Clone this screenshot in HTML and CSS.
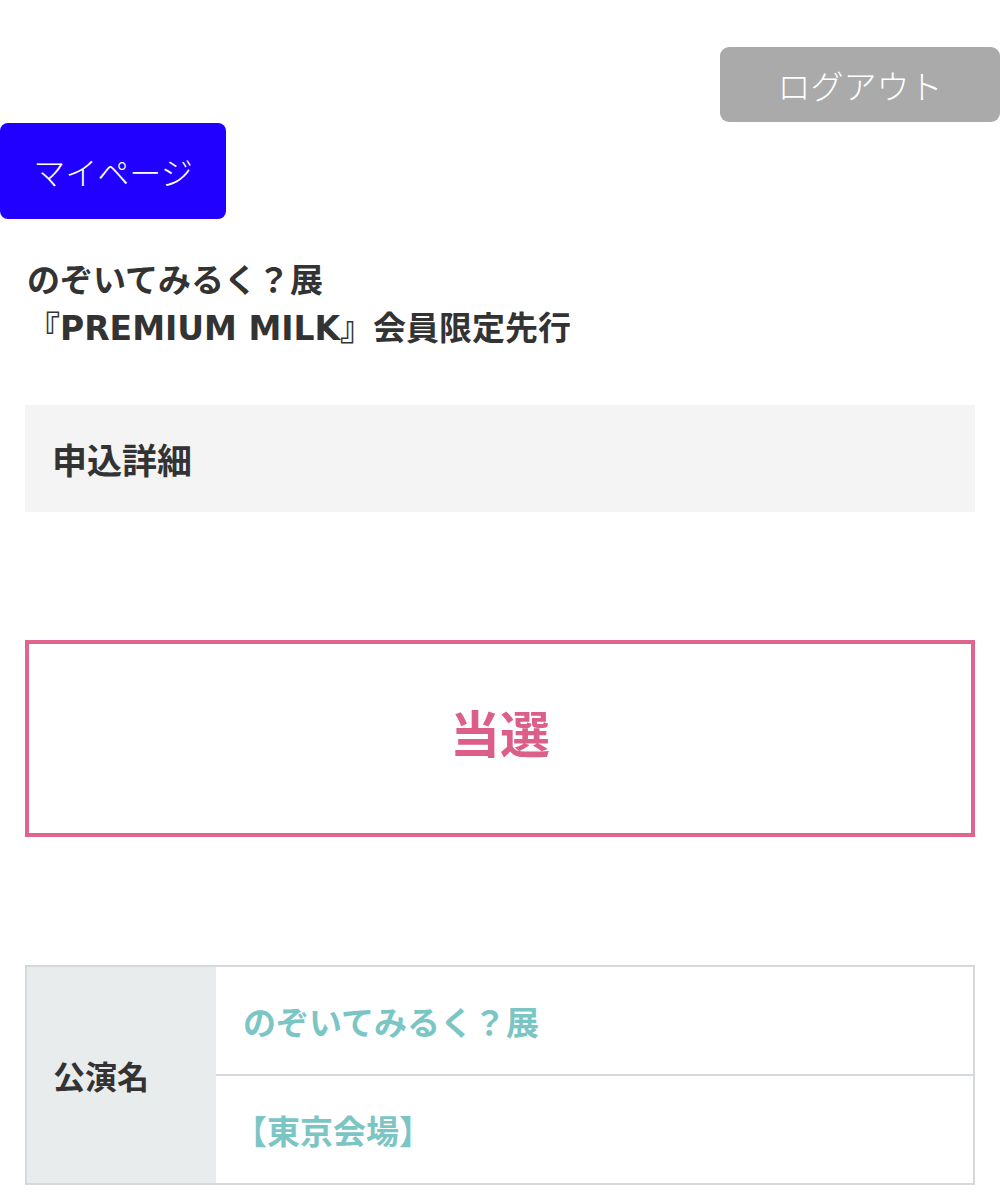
FILE: index.html
```html
<!DOCTYPE html>
<html lang="ja">
<head>
    <meta charset="UTF-8">
    <meta name="viewport" content="width=device-width, initial-scale=1.0">
    <title>申込詳細</title>
    <link rel="stylesheet" href="styles.css">
</head>
<body>
    <div class="header">
        <a class="logout-btn" href="#">ログアウト</a>
    </div>
    <div class="nav">
        <a class="mypage-btn" href="#">マイページ</a>
    </div>

    <!-- Event title -->
    <div class="event-title">
        のぞいてみるく？展<br>
        『PREMIUM MILK』会員限定先行
    </div>

    <div class="section-head">申込詳細</div>

    <!-- Lottery result -->
    <div class="result">当選</div>

    <!-- Detail table -->
    <table class="detail">
        <colgroup>
            <col class="label-col">
            <col>
        </colgroup>
        <tr>
            <th rowspan="2">公演名</th>
            <td>のぞいてみるく？展</td>
        </tr>
        <tr>
            <td class="venue">【東京会場】</td>
        </tr>
    </table>
</body>
</html>
```

FILE: styles.css
```css
/* Base */
body {
    font-family: "Liberation Sans", "Noto Sans CJK JP", sans-serif;
    background-color: #fff;
    color: #333;
    margin: 0;
    padding: 0;
}

a {
    text-decoration: none;
}

/* Buttons */
.header {
    display: flex;
    justify-content: flex-end;
    padding-top: 47px;
}

.logout-btn {
    display: flex;
    align-items: center;
    justify-content: center;
    width: 280px;
    height: 75px;
    background-color: #aaaaaa;
    color: #fff;
    font-family: "Noto Sans CJK JP", sans-serif;
    font-size: 33px;
    font-weight: 300;
    border-radius: 9px;
}

.nav {
    padding-top: 1px;
}

.mypage-btn {
    display: flex;
    align-items: center;
    justify-content: center;
    width: 226px;
    height: 96px;
    background-color: #2200ff;
    color: #fff;
    font-family: "Noto Sans CJK JP", sans-serif;
    font-size: 32px;
    font-weight: 300;
    border-radius: 8px;
}

/* Title */
.event-title {
    margin-top: 38px;
    padding-left: 27px;
    font-family: "DejaVu Sans", "Noto Sans CJK JP", sans-serif;
    font-size: 33px;
    font-weight: bold;
    line-height: 48px;
}

.section-head {
    margin: 52px 25px 0;
    height: 107px;
    padding-left: 27px;
    display: flex;
    align-items: center;
    background-color: #f4f4f4;
    font-size: 35px;
    font-weight: bold;
}

/* Result box */
.result {
    margin: 128px 25px 0;
    height: 197px;
    padding-bottom: 16px;
    box-sizing: border-box;
    border: 4px solid #e0658c;
    display: flex;
    align-items: center;
    justify-content: center;
    color: #dc5f8a;
    font-size: 50px;
    font-weight: bold;
}

/* Table */
.detail {
    margin: 128px 25px 0;
    width: 950px;
    table-layout: fixed;
    border-collapse: collapse;
    border: 2px solid #d6d9db;
}

.label-col {
    width: 190px;
}

.detail th {
    background-color: #e8eced;
    text-align: left;
    padding-left: 26px;
    font-size: 32px;
    font-weight: bold;
    color: #333;
}

.detail td {
    height: 107px;
    padding: 0 0 0 27px;
    border-bottom: 2px solid #d6d9db;
    color: #7cc5c5;
    font-size: 33px;
    font-weight: bold;
}

.detail td.venue {
    padding-left: 18px;
}
```
